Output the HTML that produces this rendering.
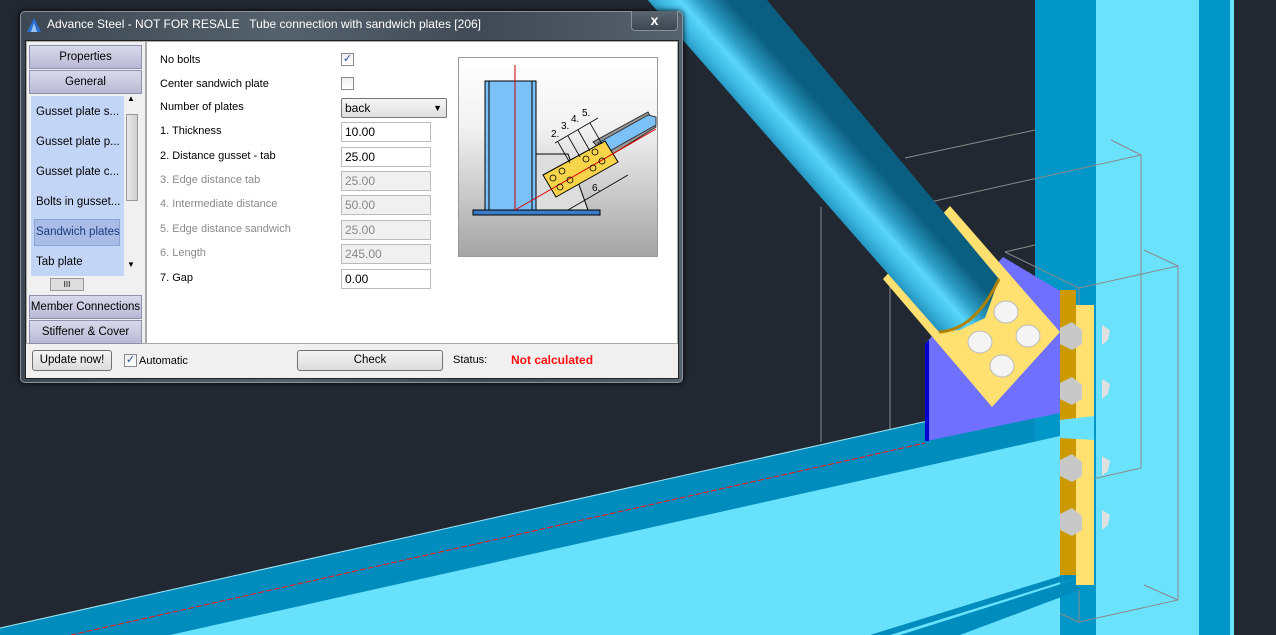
<!DOCTYPE html>
<html><head><meta charset="utf-8"><style>
*{margin:0;padding:0;box-sizing:border-box}
body{width:1276px;height:635px;overflow:hidden;background:#222831;position:relative;font-family:"Liberation Sans",sans-serif;font-size:11px;color:#000}
.a{position:absolute}
.dlg{left:20px;top:11px;width:663px;height:372px;border-radius:5px;background:linear-gradient(90deg,#3d4852,#55616c 40%,#3f4a55 70%,#56626d);border:1px solid #8a949e;box-shadow:0 0 6px #000}
.title{left:26px;top:5px;color:#fff;font-size:12px;white-space:nowrap}
.close{left:610px;top:-1px;width:47px;height:20px;border:1px solid #8a949e;border-top:none;border-radius:0 0 4px 4px;background:linear-gradient(#5a6670,#3c4650);color:#fff;text-align:center;font-weight:bold;font-size:14px;line-height:18px}
.client{left:4px;top:28px;width:654px;height:339px;background:#f0f0f0;border:1px solid #222}
.btn{position:absolute;left:3px;width:113px;height:24px;background:linear-gradient(#d9d9ec,#b9b9d4);border:1px solid #8f8fae;text-align:center;line-height:23px;font-size:11.5px}
.list{left:5px;top:55px;width:109px;height:196px;background:#c3d5f7}
.li{position:absolute;left:10px;font-size:11.5px;white-space:nowrap}
.white{left:120px;top:0;width:532px;height:303px;background:#fff;border:1px solid #aaa}
.lbl{position:absolute;left:13px;white-space:nowrap;font-size:11px}
.dis{color:#8a8a8a}
.inp{position:absolute;left:194px;width:90px;height:20px;border:1px solid #bbb;background:#fff;padding-left:3px;line-height:18px;font-size:12px}
.inp.d{background:#f0f0f0;color:#888}
.cb{position:absolute;width:13px;height:13px;border:1px solid #8a8a8a;background:linear-gradient(#eee,#fff);font-size:11px;line-height:11px;text-align:center;color:#3050a0}
.pb{position:absolute;height:21px;border:1px solid #707070;border-radius:3px;background:linear-gradient(#f4f4f4,#dcdcdc);text-align:center;line-height:19px;font-size:11.5px}
</style></head><body>
<svg class="a" style="left:0;top:0" width="1276" height="635">
<defs>
<linearGradient id="tube" gradientUnits="userSpaceOnUse" x1="700" y1="150" x2="790" y2="70">
<stop offset="0" stop-color="#053a52"/><stop offset=".15" stop-color="#075070"/><stop offset=".3" stop-color="#0b6a8e"/><stop offset=".45" stop-color="#1c8ab4"/><stop offset=".58" stop-color="#3cb8e2"/><stop offset=".7" stop-color="#5ad6fa"/><stop offset=".82" stop-color="#2c9cc4"/><stop offset="1" stop-color="#0a5f80"/>
</linearGradient>
</defs>
<rect x="1035" y="0" width="61" height="635" fill="#0096c8"/>
<rect x="1096" y="0" width="103" height="635" fill="#6ae2fc"/>
<rect x="1199" y="0" width="31" height="635" fill="#0096c8"/>
<rect x="1230" y="0" width="4" height="635" fill="#6ae2fc"/>
<g stroke="#8a8a8a" stroke-width="1" fill="none">
<path d="M905 158 L1035 130"/><path d="M890 211 L1141 155 L1141 468"/><path d="M1111 140 L1141 155"/>
<path d="M890 211 L890 525 L1141 468"/><path d="M861 512 L890 525"/><path d="M821 207 L821 442"/>
<path d="M1005 252 L1035 245"/><path d="M1005 252 L1079 288 L1178 266 L1178 600 L1079 622 L1079 288"/>
<path d="M1144 250 L1178 266"/><path d="M1144 585 L1178 600"/><path d="M1030 600 L1079 622"/>
</g>
<polygon points="0,628 1035,397 1035,635 0,635" fill="#008cbd"/>
<polygon points="170,635 1060,436 1060,635" fill="#68e2fc"/>
<line x1="0" y1="628" x2="1035" y2="397" stroke="#a8e8f8" stroke-width="1"/>
<line x1="71" y1="635" x2="925" y2="443" stroke="#ff1010" stroke-width="1" stroke-dasharray="6,2"/>
<polygon points="900,635 1080,578 1080,590 960,635" fill="#008cbd"/>
<polygon points="870,635 1080,570 1080,576 890,635" fill="#008cbd"/>
<polygon points="1003,257 1060,291 1060,413 927,441 925,344" fill="#7070ff"/>
<polygon points="925,344 929,340 929,441 925,441" fill="#0000d0"/>
<rect x="1060" y="290" width="16" height="285" fill="#cc9900"/>
<rect x="1076" y="305" width="18" height="280" fill="#ffe070"/>
<polygon points="1060,420 1094,416 1094,440 1060,438" fill="#68e2fc"/>
<polygon points="950,206 1060,332 992,407 883,279" fill="#ffe070"/>
<polygon points="600,0 767,0 999,279 985,318 960,330 939,332 560,-100" fill="url(#tube)"/>
<path d="M939 332 Q975 330 999 279" stroke="#b08000" stroke-width="3" fill="none"/>
<g fill="#f4f4f4" stroke="#bbb" stroke-width="1">
<ellipse cx="1006" cy="312" rx="12" ry="11"/><ellipse cx="1028" cy="336" rx="12" ry="11"/>
<ellipse cx="980" cy="342" rx="12" ry="11"/><ellipse cx="1002" cy="366" rx="12" ry="11"/>
</g>
<g fill="#c8c8c8">
<polygon points="1060,328 1072,322 1082,330 1082,344 1072,350 1060,344"/>
<polygon points="1060,383 1072,377 1082,385 1082,399 1072,405 1060,399"/>
<polygon points="1060,460 1072,454 1082,462 1082,476 1072,482 1060,476"/>
<polygon points="1060,514 1072,508 1082,516 1082,530 1072,536 1060,530"/>
</g>
<g fill="#e0e0e0">
<polygon points="1102,325 1110,330 1108,340 1102,345"/><polygon points="1102,379 1110,384 1108,394 1102,399"/>
<polygon points="1102,456 1110,461 1108,471 1102,476"/><polygon points="1102,510 1110,515 1108,525 1102,530"/>
</g>
</svg>

<div class="a dlg">
<svg class="a" style="left:5px;top:5px" width="16" height="16"><polygon points="8,1 15,15 1,15" fill="#2a6fd0"/><polygon points="8,6 11,15 5,15" fill="#9cc4f0"/></svg>
<div class="a title">Advance Steel - NOT FOR RESALE&nbsp;&nbsp; Tube connection with sandwich plates [206]</div>
<div class="a close">x</div>
<div class="a client">
  <div class="a" style="left:0;top:0;width:120px;height:303px;background:#f0f0f0;border:1px solid #aaa"></div>
  <div class="btn" style="top:4px">Properties</div>
  <div class="btn" style="top:29px">General</div>
  <div class="a list">
    <div class="li" style="top:10px;left:5px">Gusset plate s...</div>
    <div class="li" style="top:40px;left:5px">Gusset plate p...</div>
    <div class="li" style="top:70px;left:5px">Gusset plate c...</div>
    <div class="li" style="top:100px;left:5px">Bolts in gusset...</div>
    <div class="a" style="left:3px;top:123px;width:86px;height:27px;background:#a9bce6;border:1px solid #8ea4d6"></div>
    <div class="li" style="top:130px;left:5px;color:#1a3a80">Sandwich plates</div>
    <div class="li" style="top:160px;left:5px">Tab plate</div>
    <div class="a" style="left:93px;top:0;width:16px;height:180px;background:#f0f0f0"></div>
    <div class="a" style="left:95px;top:18px;width:12px;height:87px;background:linear-gradient(90deg,#e8e8e8,#d0d0d0);border:1px solid #999"></div>
    <div class="a" style="left:96px;top:-2px;font-size:8px">▲</div>
    <div class="a" style="left:96px;top:164px;font-size:8px">▼</div>
    <div class="a" style="left:0;top:180px;width:109px;height:16px;background:#f0f0f0"></div>
    <div class="a" style="left:19px;top:182px;width:34px;height:13px;background:#ddd;border:1px solid #999;font-size:8px;text-align:center;line-height:11px">III</div>
  </div>
  <div class="btn" style="top:254px">Member Connections</div>
  <div class="btn" style="top:279px">Stiffener &amp; Cover</div>

  <div class="a white">
    <div class="lbl" style="top:12px">No bolts</div>
    <div class="cb" style="left:194px;top:11px">✓</div>
    <div class="lbl" style="top:36px">Center sandwich plate</div>
    <div class="cb" style="left:194px;top:35px"></div>
    <div class="lbl" style="top:59px">Number of plates</div>
    <div class="a" style="left:194px;top:56px;width:106px;height:20px;border:1px solid #777;border-radius:2px;background:linear-gradient(#f6f6f6,#dedede);padding-left:3px;line-height:18px;font-size:12px">back<span style="position:absolute;right:4px;top:0;font-size:9px">▼</span></div>
    <div class="lbl" style="top:83px">1. Thickness</div><div class="inp" style="top:80px">10.00</div>
    <div class="lbl" style="top:108px">2. Distance gusset - tab</div><div class="inp" style="top:105px">25.00</div>
    <div class="lbl dis" style="top:132px">3. Edge distance tab</div><div class="inp d" style="top:129px">25.00</div>
    <div class="lbl dis" style="top:156px">4. Intermediate distance</div><div class="inp d" style="top:153px">50.00</div>
    <div class="lbl dis" style="top:181px">5. Edge distance sandwich</div><div class="inp d" style="top:178px">25.00</div>
    <div class="lbl dis" style="top:205px">6. Length</div><div class="inp d" style="top:202px">245.00</div>
    <div class="lbl" style="top:230px">7. Gap</div><div class="inp" style="top:227px">0.00</div>
    <svg class="a" style="left:311px;top:15px" width="201" height="201">
      <defs><linearGradient id="pg" x1="0" y1="0" x2="0" y2="1"><stop offset="0" stop-color="#fff"/><stop offset=".35" stop-color="#f2f2f2"/><stop offset="1" stop-color="#a4a4a4"/></linearGradient></defs>
      <rect x=".5" y=".5" width="199" height="199" fill="url(#pg)" stroke="#999"/>
      <rect x="27" y="24" width="51" height="129" fill="#7cc0f8" stroke="#000"/>
      <line x1="31" y1="24" x2="31" y2="153" stroke="#000"/><line x1="74" y1="24" x2="74" y2="153" stroke="#000"/>
      <polygon points="78,97 110,97 130,153 78,153" fill="#ddd" stroke="#000"/>
      <rect x="15" y="153" width="127" height="5" fill="#3a7cc8" stroke="#000"/>
      <polygon points="135,85 190,55 198,70 150,100" fill="#999" stroke="#333"/>
      <polygon points="140,86 190,58 198,60 198,68 150,95" fill="#7cc0f8" stroke="#333"/>
      <polygon points="85,118 147,84 160,105 98,140" fill="#f7d44a" stroke="#000"/>
      <line x1="57" y1="153" x2="198" y2="72" stroke="#d00"/>
      <line x1="57" y1="8" x2="57" y2="153" stroke="#c00"/>
      <g font-size="10" fill="#000" font-family="Liberation Sans"><text x="93" y="80">2.</text><text x="103" y="72">3.</text><text x="113" y="65">4.</text><text x="124" y="59">5.</text><text x="134" y="134">6.</text></g>
      <g fill="none" stroke="#000" stroke-width=".8">
        <line x1="97" y1="86" x2="140" y2="61"/><line x1="110" y1="153" x2="170" y2="118"/>
        <line x1="100" y1="85" x2="112" y2="106"/><line x1="110" y1="79" x2="122" y2="100"/><line x1="120" y1="73" x2="132" y2="94"/><line x1="132" y1="66" x2="144" y2="87"/>
        <circle cx="95" cy="121" r="3"/><circle cx="104" cy="114" r="3"/><circle cx="102" cy="130" r="3"/><circle cx="112" cy="123" r="3"/>
        <circle cx="128" cy="102" r="3"/><circle cx="137" cy="95" r="3"/><circle cx="135" cy="111" r="3"/><circle cx="144" cy="104" r="3"/>
      </g>
    </svg>
  </div>
  <div class="pb" style="left:6px;top:309px;width:80px">Update now!</div>
  <div class="cb" style="left:98px;top:313px">✓</div>
  <div class="a" style="left:113px;top:314px;font-size:11px">Automatic</div>
  <div class="pb" style="left:271px;top:309px;width:146px">Check</div>
  <div class="a" style="left:427px;top:313px;font-size:11px">Status:</div>
  <div class="a" style="left:485px;top:312px;font-size:12px;font-weight:bold;color:#ff1010">Not calculated</div>
</div>
</div>
</body></html>
